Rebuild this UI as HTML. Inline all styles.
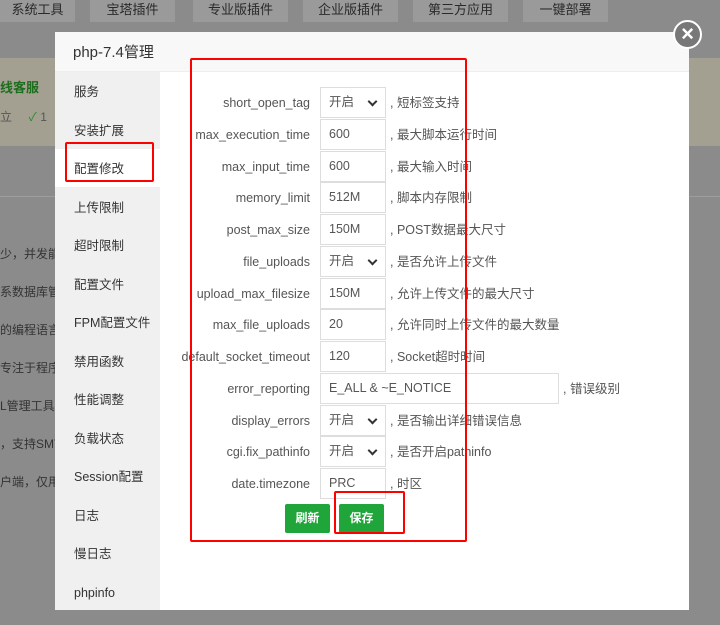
<!DOCTYPE html>
<html><head><meta charset="utf-8"><style>
*{margin:0;padding:0;box-sizing:border-box}
body{width:720px;height:625px;overflow:hidden;background:#8b8b8b;font-family:"Liberation Sans","Noto Sans CJK SC",sans-serif;position:relative;line-height:16px}
.a{position:absolute}
.tab{position:absolute;top:0;height:22px;background:#9a9a9a;color:#2a2a2a;font-size:13px;text-align:center;line-height:20px}
.side div{position:absolute;left:19px;font-size:12.5px;color:#333;line-height:16px}
.lbl{position:absolute;right:410px;font-size:12.5px;color:#555;text-align:right;white-space:nowrap;line-height:16px}
.inp{position:absolute;left:320px;width:66px;height:31px;border:1px solid #ddd;background:#fff;font-size:12.5px;color:#555;padding-left:8px;line-height:29px}
.cm{position:absolute;left:390px;font-size:12.5px;color:#555;white-space:nowrap;line-height:16px}
.sel:after{content:"";position:absolute;right:9px;top:10px;width:5px;height:5px;border-right:2px solid #333;border-bottom:2px solid #333;transform:rotate(45deg)}
.btn{position:absolute;top:504px;height:29px;width:45px;background:#20a53a;color:#fff;font-size:12px;font-weight:bold;text-align:center;line-height:29px;border-radius:2px}
.red{position:absolute;border:2px solid #f00;border-radius:2px}
</style></head><body>
<div class="tab" style="left:0;width:75px">系统工具</div>
<div class="tab" style="left:90px;width:85px">宝塔插件</div>
<div class="tab" style="left:193px;width:95px">专业版插件</div>
<div class="tab" style="left:303px;width:95px">企业版插件</div>
<div class="tab" style="left:413px;width:95px">第三方应用</div>
<div class="tab" style="left:523px;width:85px">一键部署</div>
<div class="a" style="left:0;top:58px;width:720px;height:88px;background:#a3a092"></div>
<div class="a" style="left:0;top:80px;color:#1c6e1c;font-weight:bold;font-size:13px">线客服</div>
<div class="a" style="left:0;top:109px;color:#555;font-size:12px">立 &nbsp; &nbsp; <span style="color:#2a8a2a">✓</span> 1</div>
<div class="a" style="left:0;top:196px;width:720px;height:1px;background:#9e9e9e"></div>
<div class="a" style="left:0;top:235px;font-size:12px;color:#333;line-height:38px">少，并发能<br>系数据库管理<br>的编程语言<br>专注于程序<br>L管理工具<br>，支持SMT<br>户端，仅用</div>
<div class="a" style="left:55px;top:32px;width:634px;height:578px;background:#fff"></div>
<div class="a" style="left:55px;top:32px;width:634px;height:40px;background:#f8f8f8;border-bottom:1px solid #eee"></div>
<div class="a" style="left:73px;top:44px;font-size:15px;color:#333;line-height:18px">php-7.4管理</div>
<div class="a" style="left:55px;top:72px;width:105px;height:538px;background:#f0f0f0"></div>
<div class="a" style="left:55px;top:149px;width:105px;height:38px;background:#fff"></div>
<div class="side">
<div style="top:84px;left:74px">服务</div>
<div style="top:123px;left:74px">安装扩展</div>
<div style="top:161px;left:74px">配置修改</div>
<div style="top:200px;left:74px">上传限制</div>
<div style="top:238px;left:74px">超时限制</div>
<div style="top:277px;left:74px">配置文件</div>
<div style="top:315px;left:74px">FPM配置文件</div>
<div style="top:354px;left:74px">禁用函数</div>
<div style="top:392px;left:74px">性能调整</div>
<div style="top:431px;left:74px">负载状态</div>
<div style="top:469px;left:74px">Session配置</div>
<div style="top:508px;left:74px">日志</div>
<div style="top:546px;left:74px">慢日志</div>
<div style="top:585px;left:74px">phpinfo</div>
</div>
<div class="lbl" style="top:95px">short_open_tag</div><div class="inp sel" style="top:87px">开启</div><div class="cm" style="top:95px">, 短标签支持</div>
<div class="lbl" style="top:127px">max_execution_time</div><div class="inp" style="top:119px">600</div><div class="cm" style="top:127px">, 最大脚本运行时间</div>
<div class="lbl" style="top:159px">max_input_time</div><div class="inp" style="top:151px">600</div><div class="cm" style="top:159px">, 最大输入时间</div>
<div class="lbl" style="top:190px">memory_limit</div><div class="inp" style="top:182px">512M</div><div class="cm" style="top:190px">, 脚本内存限制</div>
<div class="lbl" style="top:222px">post_max_size</div><div class="inp" style="top:214px">150M</div><div class="cm" style="top:222px">, POST数据最大尺寸</div>
<div class="lbl" style="top:254px">file_uploads</div><div class="inp sel" style="top:246px">开启</div><div class="cm" style="top:254px">, 是否允许上传文件</div>
<div class="lbl" style="top:286px">upload_max_filesize</div><div class="inp" style="top:278px">150M</div><div class="cm" style="top:286px">, 允许上传文件的最大尺寸</div>
<div class="lbl" style="top:317px">max_file_uploads</div><div class="inp" style="top:309px">20</div><div class="cm" style="top:317px">, 允许同时上传文件的最大数量</div>
<div class="lbl" style="top:349px">default_socket_timeout</div><div class="inp" style="top:341px">120</div><div class="cm" style="top:349px">, Socket超时时间</div>
<div class="lbl" style="top:381px">error_reporting</div><div class="inp" style="top:373px;width:239px">E_ALL &amp; ~E_NOTICE</div><div class="cm" style="top:381px;left:563px">, 错误级别</div>
<div class="lbl" style="top:413px">display_errors</div><div class="inp sel" style="top:405px">开启</div><div class="cm" style="top:413px">, 是否输出详细错误信息</div>
<div class="lbl" style="top:444px">cgi.fix_pathinfo</div><div class="inp sel" style="top:436px">开启</div><div class="cm" style="top:444px">, 是否开启pathinfo</div>
<div class="lbl" style="top:476px">date.timezone</div><div class="inp" style="top:468px">PRC</div><div class="cm" style="top:476px">, 时区</div>
<div class="btn" style="left:285px">刷新</div>
<div class="btn" style="left:339px">保存</div>
<div class="red" style="left:190px;top:58px;width:277px;height:484px"></div>
<div class="red" style="left:65px;top:142px;width:89px;height:40px"></div>
<div class="red" style="left:334px;top:491px;width:71px;height:43px"></div>
<div class="a" style="left:673px;top:20px;width:29px;height:29px;border-radius:50%;background:#787878;border:2px solid #fff;color:#fff;font-size:22px;line-height:23px;text-align:center;font-weight:bold">×</div>
</body></html>
